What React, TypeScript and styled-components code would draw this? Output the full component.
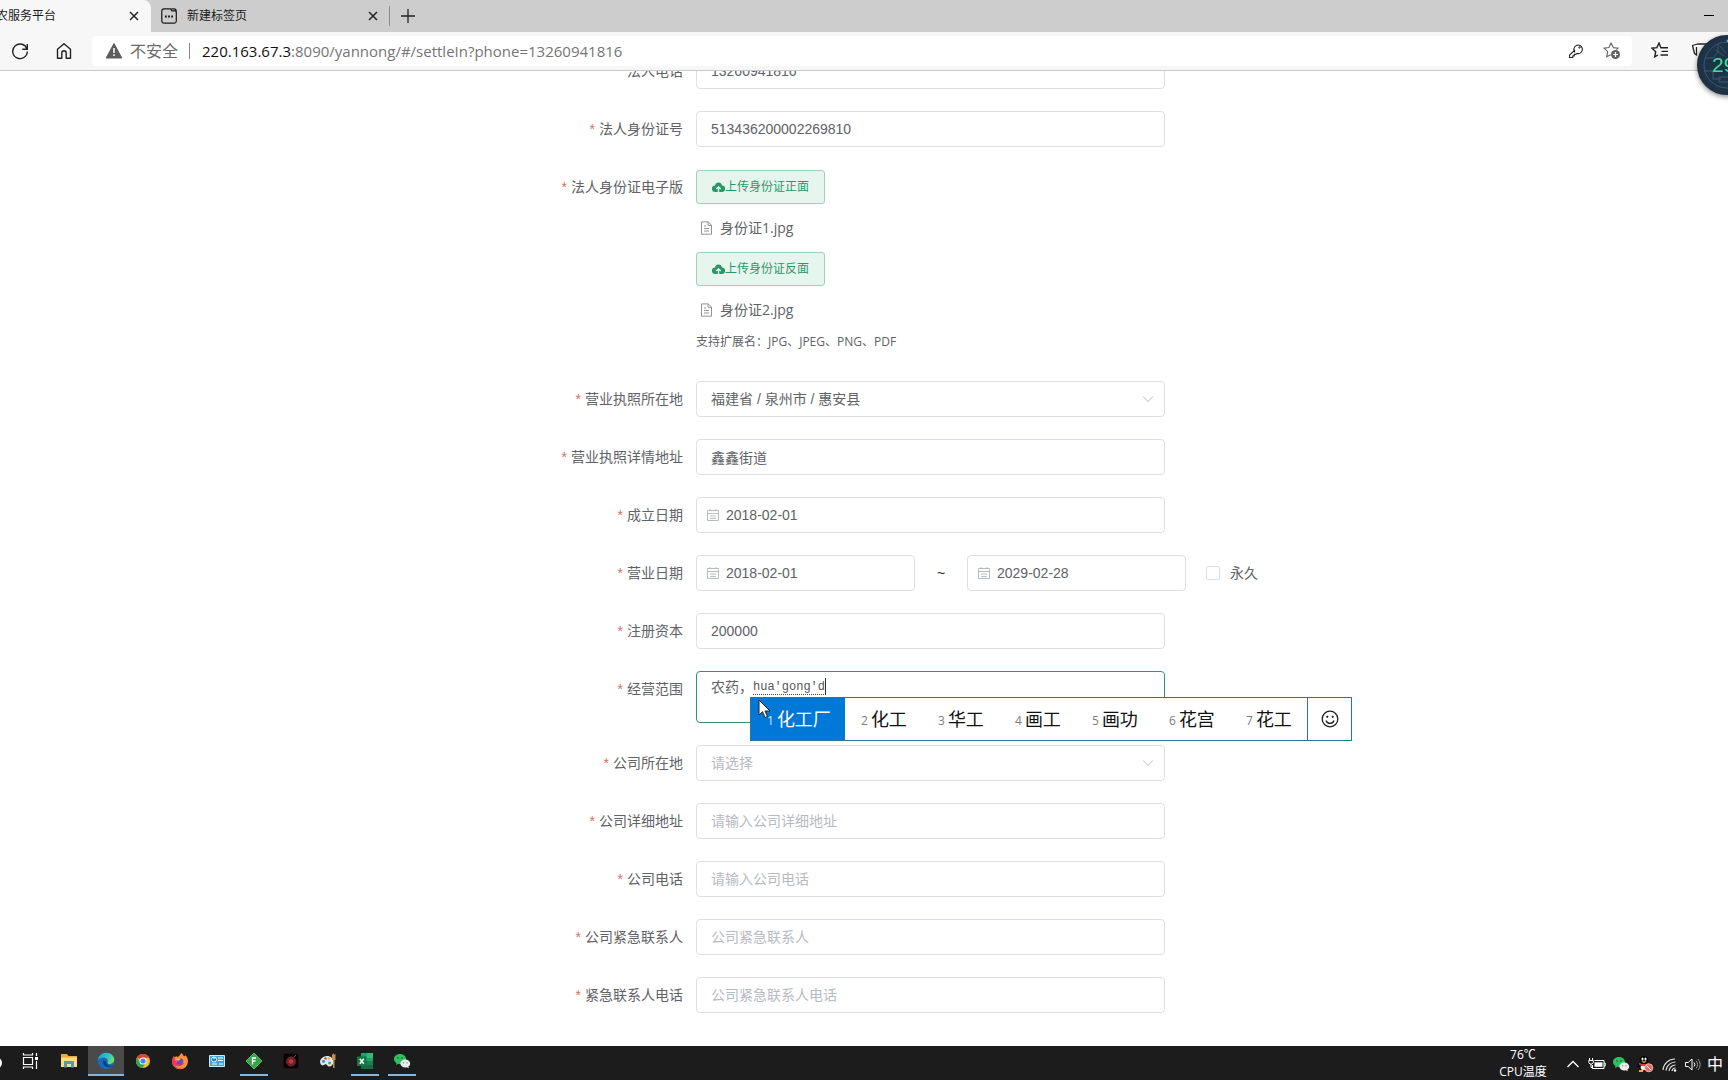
import React from 'react';
import styled, { createGlobalStyle, css } from 'styled-components';

const UI = '"Open Sans", "Noto Sans CJK SC", sans-serif';
const FORM = '"Liberation Sans", "Noto Sans CJK SC", sans-serif';

const Global = createGlobalStyle`
  *, *::before, *::after { box-sizing: border-box; }
  body { margin: 0; overflow: hidden; background: #fff; font-family: ${FORM}; }
  button { font-family: inherit; cursor: pointer; }
`;

const Screen = styled.div`
  height: 100vh;
  display: flex;
  flex-direction: column;
  overflow: hidden;
  position: relative;
`;

/* ---------- browser chrome ---------- */

const TabStrip = styled.div`
  flex: none;
  display: flex;
  align-items: stretch;
  height: 32px;
  background: #cdcdcd;
  font-family: ${UI};
`;

const Tab = styled.div<{ $active?: boolean }>`
  display: flex;
  align-items: center;
  gap: 10px;
  font-size: 12px;
  line-height: 16px;
  color: #1a1a1a;
  overflow: hidden;
  white-space: nowrap;
  ${(p) =>
    p.$active
      ? css`
          width: 151px;
          justify-content: flex-end;
          padding-right: 8px;
          background: #f7f7f7;
          border-top-right-radius: 8px;
        `
      : css`
          width: 239px;
          padding: 0 8px 0 10px;
          position: relative;
          &::after {
            content: '';
            width: 1px;
            height: 20px;
            background: #8a8a8a;
            position: absolute;
            right: 0;
            top: 6px;
          }
        `}
`;

const TabTitle = styled.span<{ $fixed?: boolean }>`
  flex: 1;
  display: flex;
  ${(p) => p.$fixed && 'justify-content: flex-end; padding-right: 59px;'}
`;

const IconButton = styled.button<{ $w?: number; $h?: number; $color?: string }>`
  flex: none;
  display: inline-flex;
  align-items: center;
  justify-content: center;
  width: ${(p) => p.$w ?? 18}px;
  height: ${(p) => p.$h ?? 18}px;
  padding: 0;
  border: 0;
  background: none;
  color: ${(p) => p.$color ?? '#222'};
  svg { flex: none; display: block; }
`;

const StripEnd = styled.div`
  flex: 1;
  display: flex;
  justify-content: flex-end;
  align-items: center;
  padding-right: 6px;
`;

const Toolbar = styled.div`
  flex: none;
  display: flex;
  align-items: center;
  height: 39px;
  background: #f7f7f7;
  border-bottom: 1px solid #c8c8c8;
  font-family: ${UI};
`;

const NavButtons = styled.div`
  flex: none;
  width: 92px;
  padding-left: 2px;
  display: flex;
  gap: 8px;
`;

const AddressBar = styled.form`
  flex: 1;
  display: flex;
  align-items: center;
  height: 30px;
  padding: 0 2px 0 14px;
  background: #fff;
  border-radius: 4px;
`;

const Insecure = styled.button`
  display: flex;
  align-items: center;
  gap: 8px;
  height: 24px;
  padding: 0;
  border: 0;
  background: none;
  color: #6b6b6b;
  font-size: 16px;
  line-height: 24px;
`;

const Separator = styled.span`
  width: 1px;
  height: 16px;
  margin: 0 12px 0 11px;
  background: #8a8a8a;
`;

const Url = styled.a`
  flex: 1;
  color: #757575;
  font-size: 15px;
  line-height: 24px;
  text-decoration: none;
  b { font-weight: 400; color: #111; }
`;

const ToolbarEnd = styled.div`
  flex: none;
  display: flex;
  gap: 4px;
  width: 96px;
  padding-left: 10px;
`;

const TempBall = styled.div`
  position: absolute;
  top: 35px;
  right: -29px;
  width: 60px;
  height: 60px;
  border-radius: 50%;
  overflow: hidden;
  background: #1c3348;
  border: 3px solid #203040;
  box-shadow: 0 2px 5px rgba(0, 0, 0, 0.45);
  color: #45dc98;
  font-family: ${FORM};
  font-size: 21px;
  line-height: 54px;
  padding-left: 12px;
  svg { position: absolute; inset: 0; }
  span { position: relative; }
`;

/* ---------- page ---------- */

const Viewport = styled.main`
  flex: 1;
  min-height: 0;
  overflow: hidden;
  display: flex;
  flex-direction: column;
  justify-content: flex-end;
  background: #fff;
`;

const Form = styled.form`
  flex: none;
  display: flex;
  flex-direction: column;
  gap: 22px;
  width: 100%;
  max-width: 864px;
  margin: 0 auto;
  padding-bottom: 33px;
  color: #606266;
  font-size: 14px;
`;

const Row = styled.div`
  display: grid;
  grid-template-columns: 251px minmax(0, 1fr);
  column-gap: 13px;
  align-items: start;
`;

const Label = styled.label`
  text-align: right;
  line-height: 36px;
  &::before {
    content: '*';
    margin-right: 4px;
    color: #d8706a;
  }
`;

const Control = styled.div<{ $w?: number }>`
  position: relative;
  display: flex;
  align-items: center;
  width: ${(p) => p.$w ?? 469}px;
`;

const box = css`
  display: block;
  width: 100%;
  border: 1px solid #dcdfe6;
  border-radius: 4px;
  background: #fff;
  color: #606266;
  font-family: ${FORM};
  font-size: 14px;
  outline: none;
`;

const Input = styled.input<{ $icon?: boolean }>`
  ${box}
  height: 36px;
  padding: 0 14px 0 ${(p) => (p.$icon ? 29 : 14)}px;
  &::placeholder { color: #b6bac2; opacity: 1; }
`;

const Select = styled.select<{ $empty?: boolean }>`
  ${box}
  height: 36px;
  padding: 0 30px 0 14px;
  appearance: none;
  color: ${(p) => (p.$empty ? '#b6bac2' : '#606266')};
`;

const TextArea = styled.textarea`
  ${box}
  height: 52px;
  padding: 5px 14px;
  line-height: 21px;
  border-color: #358f7c;
  resize: none;
`;

const Adornment = styled.span<{ $right?: boolean }>`
  position: absolute;
  top: 0;
  ${(p) => (p.$right ? 'right: 11px;' : 'left: 10px;')}
  height: 36px;
  display: flex;
  align-items: center;
  color: #b6bac2;
  pointer-events: none;
`;

const Uploads = styled.div`
  display: flex;
  flex-direction: column;
  align-items: flex-start;
  padding-top: 1px;
`;

const UploadButton = styled.button`
  display: inline-flex;
  align-items: center;
  height: 34px;
  padding: 0 15px;
  border: 1px solid #a2d0be;
  border-radius: 3px;
  background: #e7f5ef;
  color: #2d9668;
  font-size: 12px;
  line-height: 16px;
`;

const FileLink = styled.a`
  display: flex;
  align-items: center;
  gap: 7px;
  height: 24px;
  margin: 12px 0;
  padding-left: 4px;
  color: #606266;
  font-family: ${UI};
  font-size: 14px;
  line-height: 24px;
  text-decoration: none;
  svg { color: #909399; }
`;

const Hint = styled.p`
  margin: 0 0 9px;
  font-family: ${UI};
  font-size: 12px;
  line-height: 16px;
`;

const Range = styled.div`
  display: flex;
  align-items: center;
`;

const Tilde = styled.span`
  width: 52px;
  text-align: center;
  color: #222;
`;

const Permanent = styled.label`
  display: flex;
  align-items: center;
  gap: 10px;
  margin-left: 20px;
  line-height: 36px;
`;

const CheckBox = styled.input`
  appearance: none;
  width: 14px;
  height: 14px;
  margin: 0;
  border: 1px solid #dcdfe6;
  border-radius: 2px;
  background: #fff;
`;

/* ---------- input method window ---------- */

const Composition = styled.span`
  position: absolute;
  left: 57px;
  top: 7px;
  height: 17px;
  border-bottom: 1px dotted #444;
  border-right: 1px solid #333;
  color: #555;
  font-family: "Liberation Mono", monospace;
  font-size: 12px;
  line-height: 18px;
`;

const Candidates = styled.div`
  position: absolute;
  z-index: 2;
  left: 54px;
  top: 26px;
  display: flex;
  height: 44px;
  border: 1px solid #2d7590;
  background: #fff;
  font-family: ${UI};
`;

const Candidate = styled.button<{ $selected?: boolean }>`
  display: flex;
  align-items: center;
  gap: 3px;
  width: ${(p) => (p.$selected ? 94 : 77)}px;
  padding: 0 0 0 16px;
  border: 0;
  background: ${(p) => (p.$selected ? '#0078d7' : '#fff')};
  color: ${(p) => (p.$selected ? '#fff' : '#111')};
  font-size: 18px;
  line-height: 24px;
  white-space: nowrap;
  small {
    padding-top: 3px;
    color: ${(p) => (p.$selected ? '#cfe6f8' : '#7d7d7d')};
    font-size: 12px;
  }
`;

const Emoji = styled.button`
  display: flex;
  align-items: center;
  justify-content: center;
  width: 44px;
  padding: 0;
  border: 0;
  border-left: 1px solid #2d7590;
  background: #fff;
  color: #222;
`;

const Pointer = styled.svg`
  position: absolute;
  z-index: 3;
  left: 62px;
  top: 28px;
`;

/* ---------- taskbar ---------- */

const Taskbar = styled.footer`
  flex: none;
  display: flex;
  height: 34px;
  background: #1c1c1c;
  color: #fff;
  font-family: ${UI};
`;

const Apps = styled.div`
  flex: 1;
  display: flex;
  gap: 1px;
`;

const Cortana = styled.button`
  width: 11px;
  height: 34px;
  padding: 0;
  border: 0;
  background: none;
  svg { display: block; }
`;

const AppButton = styled.button<{ $state?: 'active' | 'open' }>`
  position: relative;
  display: flex;
  align-items: center;
  justify-content: center;
  width: 36px;
  height: 30px;
  padding: 0;
  border: 0;
  background: ${(p) => (p.$state === 'active' ? '#4a4a4a' : 'none')};
  &:first-of-type + & { margin-left: 0; }
  &::after {
    content: '';
    display: ${(p) => (p.$state ? 'block' : 'none')};
    position: absolute;
    bottom: 0;
    left: ${(p) => (p.$state === 'active' ? 0 : 4)}px;
    right: ${(p) => (p.$state === 'active' ? 0 : 4)}px;
    height: 2px;
    background: #86b6dc;
  }
`;

const TaskViewButton = styled(AppButton)`
  margin-right: 2px;
`;

const Temperature = styled.div`
  display: flex;
  flex-direction: column;
  align-items: center;
  width: 66px;
  font-size: 12px;
  line-height: 17px;
`;

const Tray = styled.div`
  display: flex;
  align-items: center;
  padding: 2px 5px 0 0;
  margin-left: 5px;
`;

const Ime = styled.span`
  margin-left: 3px;
  font-size: 16px;
  line-height: 20px;
`;

/* ---------- icons ---------- */

const Svg = ({ s = 16, h, vb, children }: { s?: number; h?: number; vb?: string; children: React.ReactNode }) => (
  <svg width={s} height={h ?? s} viewBox={vb ?? `0 0 ${s} ${h ?? s}`} fill="none" stroke="currentColor" aria-hidden="true">
    {children}
  </svg>
);

const Cross = () => <Svg s={10}><path d="M1 1l8 8M9 1L1 9" strokeWidth="1.5" /></Svg>;
const PageIcon = () => (
  <Svg s={16}>
    <path d="M3 .8h6.500l1.500 2H14a1.300 1.300 0 0 1 1.300 1.300V13A2.200 2.200 0 0 1 13 15.200H3A2.200 2.200 0 0 1 .8 13V3A2.200 2.200 0 0 1 3 .8zM10.500 .8H13a2.200 2.200 0 0 1 2.200 2.200V5" strokeWidth="1.200" />
    <path d="M4 8.500h1.800M7.100 8.500h1.800M10.200 8.500H12" strokeWidth="1.800" />
  </Svg>
);
const Refresh = () => (
  <Svg s={18}>
    <path d="M16 7.200A7.300 7.300 0 1 0 16.300 9.500" strokeWidth="1.400" />
    <path d="M16.300 2v5.200h-5" strokeWidth="1.400" />
  </Svg>
);
const Home = () => (
  <Svg s={18}><path d="M2.500 7.300L9 1.800l6.500 5.500v8.900h-4.300V11a2.200 2.200 0 0 0-4.400 0v5.200H2.500z" strokeWidth="1.400" strokeLinejoin="round" /></Svg>
);
const Warn = () => (
  <Svg s={16}>
    <path d="M8 .5L15.800 15H.2z" fill="#5c5c5c" stroke="#5c5c5c" strokeLinejoin="round" />
    <path d="M8 5v5M8 11.300V13" stroke="#fff" strokeWidth="1.500" />
  </Svg>
);
const Key = () => (
  <Svg s={16}>
    <path d="M7 9.300A4.300 4.300 0 1 1 9 10.500L7.800 11.400H6.300v1.500H4.800v1.600H1.500v-2.300L7 7" strokeWidth="1.100" strokeLinejoin="round" />
    <circle cx="11.500" cy="4.500" r=".7" />
  </Svg>
);
const StarPlus = () => (
  <Svg s={18}>
    <path d="M10.500 5.700L8 1 5.900 5.600 1 6.200l3.700 3.500-1 5.100 4-2.100M10.100 5.600l4.900.6-1.500 1.500" strokeWidth="1.100" />
    <circle cx="12.500" cy="12.500" r="4.500" fill="#606060" stroke="none" />
    <path d="M10 12.500h5M12.500 10v5" stroke="#fff" strokeWidth="1.200" />
  </Svg>
);
const StarList = () => (
  <Svg s={18}>
    <path d="M10 5.700h-.1L8 1 5.900 5.600 1 6.200l3.700 3.500-1 5.100L7 13" strokeWidth="1.400" />
    <path d="M10 5.700h7M10.500 9.400H17M9.500 13H17" strokeWidth="1.400" />
  </Svg>
);
const Collections = () => (
  <Svg s={18}><path d="M17 2H6.500L1.500 3.500l2 8L6 13.500M5.500 13V5" strokeWidth="1.300" strokeLinejoin="round" /></Svg>
);
const Cloud = () => (
  <Svg s={13}>
    <path d="M6.500 1.500a3.600 3.600 0 0 1 3.500 3 3 3 0 0 1-.3 6.500H3.300A3 3 0 0 1 3 4.500a3.600 3.600 0 0 1 3.500-3z" fill="currentColor" stroke="none" />
    <path d="M6.500 12V6.500M4.300 8l2.200-2.200L8.700 8" stroke="#e7f5ef" strokeWidth="1.300" />
  </Svg>
);
const Doc = () => (
  <Svg s={13} h={14}><path d="M1.500.9h6.700L11.500 4v9.200h-10zM8 1v3.300h3.400M4 5h2M4 7.500h5M4 10h5" /></Svg>
);
const Calendar = () => (
  <Svg s={14}><path d="M1.500 2.500h11v10h-11zM1.500 5.500h11M4 1v2M10 1v2M4 8h6M4 10.400h6" /></Svg>
);
const Chevron = () => <Svg s={12}><path d="M1 3.500l5 5 5-5" /></Svg>;
const Smile = () => (
  <Svg s={18}>
    <circle cx="9" cy="9" r="7.800" strokeWidth="1.300" />
    <path d="M5 10.500a4.200 4.200 0 0 0 8 0" strokeWidth="1.300" />
    <circle cx="6.300" cy="6.800" r=".7" fill="currentColor" /><circle cx="11.700" cy="6.800" r=".7" fill="currentColor" />
  </Svg>
);

const TaskView = () => (
  <Svg s={18}><path d="M2.500 5.500h9v7h-9zM2.500 1v2h9V1M2.500 17v-2h9v2M15.500 1v3M15.500 9v8" stroke="#fff" strokeWidth="1.200" /><path d="M14 5h3v3h-3z" fill="#fff" stroke="none" /></Svg>
);
const Folder = () => (
  <Svg s={18}>
    <g stroke="none"><path d="M1 2h6l1.500 2H17v11H1z" fill="#e8ab3c" /><path d="M1 5.500h16V15H1z" fill="#fbdc82" /><path d="M4 15.500V9h10v6.500h-3V12H7v3.500z" fill="#4a9fc4" /></g>
  </Svg>
);
const Edge = () => (
  <Svg s={18}>
    <defs><linearGradient id="edgeTop" x1="0" y1="0" x2="1" y2=".5"><stop offset="0" stopColor="#259ade" /><stop offset=".6" stopColor="#35c1c4" /><stop offset="1" stopColor="#6bdb72" /></linearGradient></defs>
    <g stroke="none">
      <circle cx="9" cy="9" r="8.300" fill="#1769bc" />
      <path d="M.8 8.500C1.200 4 4.800.7 9.200.7c4.800 0 8.100 3.300 8.100 6.900 0 2.600-1.900 4.300-4.400 4.300-1.900 0-2.700-.7-2.300-1.500 1-2-.5-4.900-4-4.900C3.800 5.500 1.500 6.500.8 8.500z" fill="url(#edgeTop)" />
      <path d="M6.300 8.200c-1 4 2 7 5.500 6.800 2 0 3.500-.7 4.600-1.700-3.700 1.600-7.500.3-7-3.300z" fill="#133c73" />
    </g>
  </Svg>
);
const Chrome = () => (
  <Svg s={16}>
    <g stroke="none">
      <circle cx="8" cy="8" r="7" fill="#f2c02c" />
      <path d="M8 8L1.900 4.500A7 7 0 0 1 14.100 4.700H8z" fill="#dc4437" />
      <path d="M8 8l-2.500 1.500L1.900 4.500A7 7 0 0 0 7.500 15l3-5z" fill="#36a255" />
      <circle cx="8" cy="8" r="3.500" fill="#fff" /><circle cx="8" cy="8" r="2.600" fill="#4285f4" />
    </g>
  </Svg>
);
const Firefox = () => (
  <Svg s={18}>
    <g stroke="none">
      <path d="M10 1c2 1 2.500 2.500 3 3.500l1.500-1.300c1.500 1.500 2.500 3.600 2.500 6a8 8 0 0 1-16 .3c0-2.500 1-4 2-5.500l.5 1.500L5.500 4l.8 1.500C7.500 4 9.500 3.500 10 1z" fill="#ff9230" />
      <path d="M1 9.500C1 7 2 5.500 3 4l.5 2c1 5 6 7 10 5-2 3-6 4-10 2.500 2 2 5 3.500 8 3A8 8 0 0 1 1 9.500z" fill="#f0365b" />
      <circle cx="9" cy="9.500" r="3.300" fill="#7941c4" />
      <path d="M5 7c2-1.300 3.500-.6 5 .3-2 0-2 1-3 1.700z" fill="#ffca45" />
    </g>
  </Svg>
);
const Panel = () => (
  <Svg s={18}>
    <path d="M1.500 3.500h15v11h-15z" fill="#3ba5d5" stroke="#cfeaf5" />
    <circle cx="6" cy="7.500" r="2.500" fill="#226c9d" stroke="#fff" /><path d="M6 7.500V5M10 6h5M10 8.500h5M4 12h5M11 12h4" stroke="#fff" />
  </Svg>
);
const Diamond = () => (
  <Svg s={18}>
    <path d="M9 1l8 8-8 8-8-8z" fill="#36a44b" stroke="#51bd62" />
    <path d="M7.500 12.500v-6.500h3.500M7.500 9h3" stroke="#fff" strokeWidth="1.300" />
  </Svg>
);
const Recorder = () => (
  <Svg s={18}>
    <rect x="1" y="1" width="16" height="16" rx="2" fill="#050505" stroke="#301b1b" />
    <circle cx="9" cy="9.500" r="4.500" fill="#6d2028" stroke="#76252c" /><circle cx="9" cy="9.500" r="2.300" fill="#c93340" stroke="none" /><path d="M12 5l2-2" stroke="#bf3440" />
  </Svg>
);
const Paint = () => (
  <Svg s={18}>
    <g stroke="none">
      <path d="M8 4c4 0 6.500 2.500 6.500 5.500S12 15 9.500 14.500c-1.500-.3-1-2-2.500-2.200C5 12 4.500 14.500 2.500 13 -1 10 2.500 4 8 4z" fill="#d9e9f2" />
      <circle cx="4.500" cy="9.500" r="1.400" fill="#3e83d0" /><circle cx="6.500" cy="6.500" r="1.300" fill="#da4f3d" /><circle cx="10" cy="6.500" r="1.300" fill="#e7b634" /><circle cx="10.500" cy="11" r="1.500" fill="#4ba965" />
      <path d="M13 3l1.200-2 1 2 1.300-1.500V8h-1v8h-1.500V8h-1z" fill="#c98c4a" />
    </g>
  </Svg>
);
const Excel = () => (
  <Svg s={18}>
    <g stroke="none"><path d="M5 1h12v16H5z" fill="#21a366" /><path d="M11 1h6v5h-6z" fill="#38ba76" /><path d="M5 9h12v8H5z" fill="#136c3f" /><path d="M11 9h6v4h-6z" fill="#18834c" /><path d="M1 4.500h9.500V14H1z" fill="#0f7a42" /></g>
    <path d="M3.800 6.800l4 5M7.800 6.800l-4 5" stroke="#fff" strokeWidth="1.500" />
  </Svg>
);
const WeChat = () => (
  <Svg s={18}>
    <g stroke="none">
      <path d="M7 2c3.500 0 6 2.300 6 5s-2.500 5-6 5l-1.500-.2L3 13l.5-2C2 10 1 8.600 1 7c0-2.700 2.600-5 6-5z" fill="#2cc25f" />
      <circle cx="5" cy="6" r=".8" fill="#174b2a" /><circle cx="9" cy="6" r=".8" fill="#174b2a" />
      <path d="M12.300 7.500c2.800 0 4.900 1.800 4.900 4 0 1.300-.7 2.400-1.800 3.100l.4 1.700-2-1c-3.500.8-6.400-1.200-6.400-3.800 0-2.200 2.200-4 4.900-4z" fill="#eaeeea" />
      <circle cx="10.700" cy="10.800" r=".6" fill="#666" /><circle cx="14" cy="10.800" r=".6" fill="#666" />
    </g>
  </Svg>
);
const Battery = () => (
  <Svg s={18} h={14}>
    <path d="M6.500 3.500h9.500v8H4.500V8M16 6h1.200v3H16M1.500 1v2M4.500 1v2M.8 3.500h4.500v2.200L4 7H2L.8 5.700zM3 7v3.500h1.500" stroke="#fff" />
    <path d="M6.500 5.300h8v4.500h-8z" fill="#fff" stroke="none" />
  </Svg>
);
const Penguin = () => (
  <Svg s={18}>
    <g stroke="none">
      <path d="M8 1c3 0 4.500 2 4.300 5l2 4-1 1.500L12 16H4l-1.500-4.500-1 .5.5-2.500 1.700-3.500C3.500 3 5 1 8 1z" fill="#050505" />
      <ellipse cx="6.500" cy="4" rx="1" ry="1.500" fill="#fff" /><ellipse cx="9.500" cy="4" rx="1" ry="1.500" fill="#fff" />
      <path d="M5 6.300h6L8 8z" fill="#f4ac2f" /><ellipse cx="7.500" cy="12.500" rx="2.800" ry="2.800" fill="#eee" />
      <path d="M3 7.500c3 2 7 2 10 0v2c-3 2-7 2-10 0z" fill="#e2392d" /><path d="M3 15h4v2H3z" fill="#f4ac2f" />
    </g>
    <circle cx="12.800" cy="12.800" r="4" fill="#e57068" stroke="#f3b0aa" /><path d="M10.500 10.500l4.600 4.600" stroke="#fff" />
  </Svg>
);
const Wifi = () => (
  <Svg s={15}>
    <path d="M1 13A12 12 0 0 1 13 2M4 13.500A9.500 9.500 0 0 1 13.500 5M7 14a6.500 6.500 0 0 1 6.500-6M10 14a3.500 3.500 0 0 1 3.500-3" stroke="#ddd" strokeWidth="1.200" />
    <circle cx="13" cy="13.500" r="1.200" fill="#fff" stroke="none" />
  </Svg>
);
const Speaker = () => (
  <Svg s={17}>
    <path d="M1.500 6.500h2.700L8 3v11l-3.800-3.500H1.500z" stroke="#fff" />
    <path d="M10 6.500a3 3 0 0 1 0 4" stroke="#fff" /><path d="M12 4.700a5.500 5.500 0 0 1 0 7.600M14 3a8 8 0 0 1 0 11" stroke="#999" />
  </Svg>
);

/* ---------- form parts ---------- */

type FieldProps = { id: string; label: string; value?: string; placeholder?: string };

const TextField = ({ id, label, value, placeholder }: FieldProps) => (
  <Row>
    <Label htmlFor={id}>{label}</Label>
    <Control><Input id={id} defaultValue={value} placeholder={placeholder} /></Control>
  </Row>
);

const SelectField = ({ id, label, value, placeholder }: FieldProps) => (
  <Row>
    <Label htmlFor={id}>{label}</Label>
    <Control>
      <Select id={id} $empty={!value}><option>{value ?? placeholder}</option></Select>
      <Adornment $right><Chevron /></Adornment>
    </Control>
  </Row>
);

const DateInput = ({ id, value, w, name }: { id: string; value: string; w?: number; name?: string }) => (
  <Control $w={w}>
    <Input id={id} $icon defaultValue={value} aria-label={name} />
    <Adornment><Calendar /></Adornment>
  </Control>
);

const candidates = ['化工厂', '化工', '华工', '画工', '画功', '花宫', '花工'];

const apps: { name: string; icon: React.ReactNode; state?: 'active' | 'open' }[] = [
  { name: 'Explorer', icon: <Folder /> },
  { name: 'Edge', icon: <Edge />, state: 'active' },
  { name: 'Chrome', icon: <Chrome /> },
  { name: 'Firefox', icon: <Firefox /> },
  { name: 'Control panel', icon: <Panel /> },
  { name: 'Forms', icon: <Diamond />, state: 'open' },
  { name: 'Recorder', icon: <Recorder /> },
  { name: 'Paint', icon: <Paint /> },
  { name: 'Excel', icon: <Excel />, state: 'open' },
  { name: 'WeChat', icon: <WeChat />, state: 'open' },
];

export default function App() {
  return (
    <Screen>
      <Global />
      <TabStrip>
        <Tab $active>
          <TabTitle $fixed>农服务平台</TabTitle>
          <IconButton aria-label="关闭"><Cross /></IconButton>
        </Tab>
        <Tab>
          <PageIcon />
          <TabTitle>新建标签页</TabTitle>
          <IconButton aria-label="关闭"><Cross /></IconButton>
        </Tab>
        <IconButton $w={36} $h={32} aria-label="新建标签"><Svg s={14}><path d="M7 0v14M0 7h14" strokeWidth="1.300" /></Svg></IconButton>
        <StripEnd>
          <IconButton $w={26} $h={30} aria-label="最小化"><Svg s={10}><path d="M0 4.500h10" stroke="#000" /></Svg></IconButton>
        </StripEnd>
      </TabStrip>

      <Toolbar>
        <NavButtons>
          <IconButton $w={36} $h={30} aria-label="刷新"><Refresh /></IconButton>
          <IconButton $w={36} $h={30} aria-label="主页"><Home /></IconButton>
        </NavButtons>
        <AddressBar>
          <Insecure type="button"><Warn />不安全</Insecure>
          <Separator />
          <Url href="#/settleIn"><b>220.163.67.3</b>:8090/yannong/#/settleIn?phone=13260941816</Url>
          <IconButton type="button" $w={36} $h={28} aria-label="密码"><Key /></IconButton>
          <IconButton type="button" $w={36} $h={28} $color="#666" aria-label="收藏"><StarPlus /></IconButton>
        </AddressBar>
        <ToolbarEnd>
          <IconButton $w={36} $h={28} aria-label="收藏夹"><StarList /></IconButton>
          <IconButton $w={36} $h={28} aria-label="集锦"><Collections /></IconButton>
        </ToolbarEnd>
      </Toolbar>

      <Viewport>
        <Form>
          <TextField id="phone" label="法人电话" value="13260941816" />
          <TextField id="idno" label="法人身份证号" value="513436200002269810" />
          <Row>
            <Label htmlFor="idfront">法人身份证电子版</Label>
            <Uploads>
              <UploadButton id="idfront" type="button"><Cloud />上传身份证正面</UploadButton>
              <FileLink href="#file1"><Doc />身份证1.jpg</FileLink>
              <UploadButton type="button"><Cloud />上传身份证反面</UploadButton>
              <FileLink href="#file2"><Doc />身份证2.jpg</FileLink>
              <Hint>支持扩展名：JPG、JPEG、PNG、PDF</Hint>
            </Uploads>
          </Row>
          <SelectField id="licarea" label="营业执照所在地" value="福建省 / 泉州市 / 惠安县" />
          <TextField id="licaddr" label="营业执照详情地址" value="鑫鑫街道" />
          <Row>
            <Label htmlFor="founded">成立日期</Label>
            <DateInput id="founded" value="2018-02-01" />
          </Row>
          <Row>
            <Label htmlFor="from">营业日期</Label>
            <Range>
              <DateInput id="from" value="2018-02-01" w={219} />
              <Tilde>~</Tilde>
              <DateInput id="to" value="2029-02-28" w={219} name="结束日期" />
              <Permanent><CheckBox type="checkbox" />永久</Permanent>
            </Range>
          </Row>
          <TextField id="capital" label="注册资本" value="200000" />
          <Row>
            <Label htmlFor="scope">经营范围</Label>
            <Control>
              <TextArea id="scope" defaultValue="农药，" />
              <Composition>hua'gong'd</Composition>
              <Candidates>
                {candidates.map((word, i) => (
                  <Candidate key={word} type="button" $selected={i === 0}><small>{i + 1}</small>{word}</Candidate>
                ))}
                <Emoji type="button" aria-label="表情"><Smile /></Emoji>
              </Candidates>
              <Pointer width="14" height="20" viewBox="0 0 14 20">
                <path d="M1 1v15l3.500-3.300L7 18.500l2.500-1L7 12h5z" fill="#fff" stroke="#222" />
              </Pointer>
            </Control>
          </Row>
          <SelectField id="coarea" label="公司所在地" placeholder="请选择" />
          <TextField id="coaddr" label="公司详细地址" placeholder="请输入公司详细地址" />
          <TextField id="cophone" label="公司电话" placeholder="请输入公司电话" />
          <TextField id="contact" label="公司紧急联系人" placeholder="公司紧急联系人" />
          <TextField id="contactphone" label="紧急联系人电话" placeholder="公司紧急联系人电话" />
        </Form>
      </Viewport>

      <Taskbar>
        <Apps>
          <Cortana aria-label="Cortana"><Svg s={8} h={16}><circle cx="-4" cy="8" r="5" stroke="#fff" strokeWidth="2" /></Svg></Cortana>
          <TaskViewButton aria-label="Task view"><TaskView /></TaskViewButton>
          {apps.map((a) => <AppButton key={a.name} aria-label={a.name} $state={a.state}>{a.icon}</AppButton>)}
        </Apps>
        <Temperature><span>76℃</span><span>CPU温度</span></Temperature>
        <Tray>
          <IconButton $w={24} aria-label="展开"><Svg s={14}><path d="M1.500 10L7 4.500 12.500 10" stroke="#fff" strokeWidth="1.300" /></Svg></IconButton>
          <IconButton $w={24} aria-label="电源"><Battery /></IconButton>
          <IconButton $w={24} aria-label="微信"><WeChat /></IconButton>
          <IconButton $w={25} aria-label="QQ"><Penguin /></IconButton>
          <IconButton $w={24} aria-label="网络"><Wifi /></IconButton>
          <IconButton $w={22} aria-label="音量"><Speaker /></IconButton>
          <Ime>中</Ime>
        </Tray>
      </Taskbar>

      <TempBall>
        <svg width="54" height="54" viewBox="0 0 54 54" fill="none" stroke="#3d586f" aria-hidden="true">
          <circle cx="27" cy="27" r="23" /><path d="M5 20h8l5-6V6M4 33h9v8h8M20 8l6 7M16 12l8 6M19 44h14v-5H19z" />
          <circle cx="28" cy="3" r="1.500" fill="#9fd0e8" />
        </svg>
        <span>29</span>
      </TempBall>
    </Screen>
  );
}
